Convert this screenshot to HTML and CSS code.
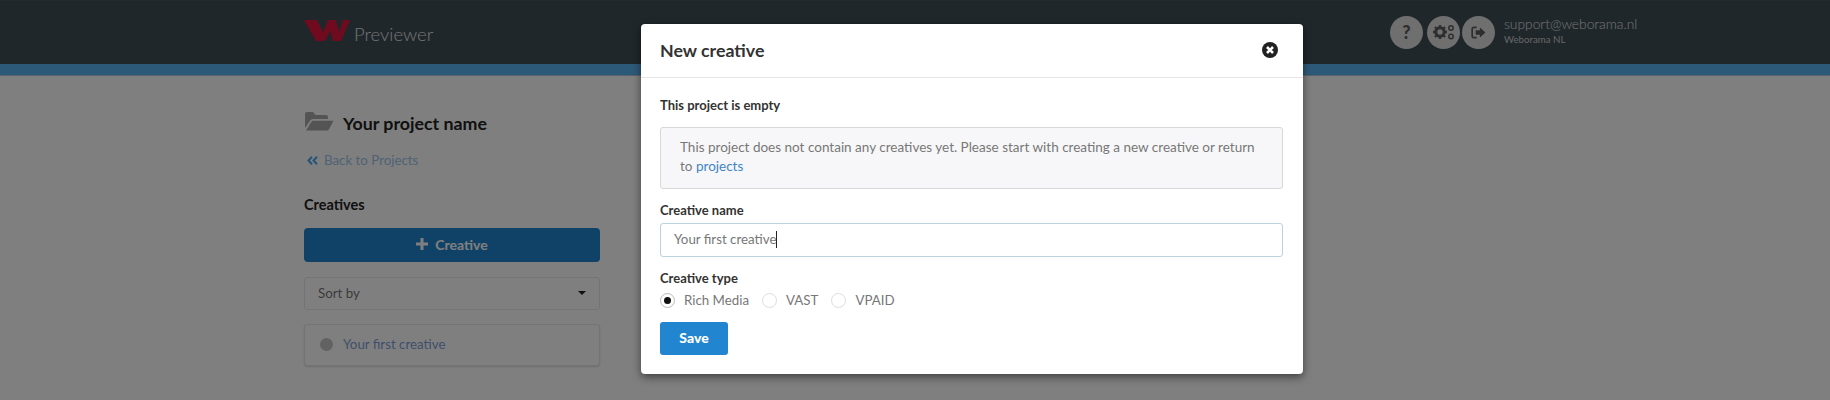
FILE: index.html
```html
<!DOCTYPE html>
<html lang="en">
<head>
<meta charset="utf-8">
<title>Previewer</title>
<link rel="stylesheet" href="styles.css">
</head>
<body>
<header class="topbar">
  <div class="brand">
    <svg class="logo" viewBox="0 0 46 22"><path d="M0 1h13l6 12 5-12h8l3 12 4-12h7l-9 21h-8l-3-10-5 10h-9z"/></svg>
    <span class="brand-name">Previewer</span>
  </div>
  <div class="account">
    <span class="round"><span class="q">?</span></span>
    <span class="round"><svg class="ic-cogs" viewBox="0 0 22 16"><circle cx="7" cy="8" r="4.2" fill="none" stroke="#5c5c5c" stroke-width="3"/><path d="M7 1v3M7 12v3M0 8h3M11 8h3M2 3l2 2M10 11l2 2M12 3l-2 2M4 11l-2 2" stroke="#5c5c5c" stroke-width="2.4"/><circle cx="18" cy="4" r="2.2" fill="none" stroke="#5c5c5c" stroke-width="1.5"/><circle cx="18" cy="12.5" r="2.2" fill="none" stroke="#5c5c5c" stroke-width="1.5"/></svg></span>
    <span class="round"><svg class="ic-out" viewBox="0 0 16 14"><path d="M6 1.5H3A1.8 1.8 0 0 0 1.2 3.300v7.400A1.800 1.800 0 0 0 3 12.500h3" fill="none" stroke="#5c5c5c" stroke-width="1.800"/><path d="M9.500 1.500 15.500 7l-6 5.500V9.300H5V4.700h4.500z" fill="#5c5c5c"/></svg></span>
    <div class="who">
      <div class="mail">support@weborama.nl</div>
      <div class="org">Weborama NL</div>
    </div>
  </div>
</header>
<div class="band"></div>
<main class="page">
  <h1 class="project"><svg class="ic-folder" viewBox="0 0 29 20"><path d="M0 17V3a2 2 0 0 1 2-2h6l2.500 3H21a2 2 0 0 1 2 2v2H8a3.500 3.500 0 0 0-3 1.700z"/><path d="M1 19.500 6.300 11A2.500 2.500 0 0 1 8.400 9.800H28.500L24 18.200a2.500 2.500 0 0 1-2.200 1.300z"/></svg>Your project name</h1>
  <a class="back"><svg class="ic-back" viewBox="0 0 11 9"><path d="M5 .8 1.500 4.500 5 8.200M10 .8 6.500 4.500 10 8.200" fill="none" stroke-width="2"/></svg>Back to Projects</a>
  <h2 class="section">Creatives</h2>
  <button class="add"><svg class="ic-plus" viewBox="0 0 12 12"><path d="M4.500 0h3v4.500H12v3H7.500V12h-3V7.500H0v-3h4.500z"/></svg>Creative</button>
  <div class="sort"><span>Sort by</span><span class="caret"></span></div>
  <div class="item"><span class="dot"></span><a>Your first creative</a></div>
</main>
<div class="overlay">
  <section class="modal">
    <div class="modal-head">
      <span class="modal-title">New creative</span>
      <svg class="ic-close" viewBox="0 0 16 16"><circle cx="8" cy="8" r="8"/><path d="M5 5l6 6M11 5l-6 6" stroke="#fff" stroke-width="2.600"/></svg>
    </div>
    <div class="modal-body">
      <div class="label first">This project is empty</div>
      <div class="notice">This project does not contain any creatives yet. Please start with creating a new creative or return to <a>projects</a></div>
      <div class="label">Creative name</div>
      <div class="field"><span class="value">Your first creative</span></div>
      <div class="label second">Creative type</div>
      <div class="radios">
        <span class="radio on"></span><span class="opt">Rich Media</span>
        <span class="radio"></span><span class="opt">VAST</span>
        <span class="radio"></span><span class="opt">VPAID</span>
      </div>
      <button class="save">Save</button>
    </div>
  </section>
</div>
</body>
</html>
```
FILE: styles.css
```css
* { box-sizing: border-box; }
html, body { margin: 0; height: 400px; overflow: hidden; }
body { background: #fff; font-family: Lato, "Open Sans", sans-serif; font-size: 13.3px; color: #333; position: relative; }
a { color: #3f86c4; }

.topbar { height: 64px; background: #3e4e56; border-top: 1px solid #465660; display: flex; padding-left: 304px; }
.brand { width: 1086px; display: flex; align-items: center; gap: 4px; }
.logo { width: 46px; height: 22px; fill: #e0143e; margin-top: -6px; }
.brand-name { font-size: 18.500px; font-weight: 300; color: #e4e4e4; margin-top: 3px; }
.account { display: flex; align-items: center; margin-top: -1px; }
.round { width: 33px; height: 33px; border-radius: 50%; background: #dedede; display: flex; align-items: center; justify-content: center; margin-right: 3px; }
.round:nth-child(2) { margin-left: 1px; margin-right: 2px; }
.q { font-size: 18px; font-weight: 900; color: #5c5c5c; }
.ic-cogs { width: 22px; height: 16px; }
.ic-out { width: 15px; height: 13px; }
.who { margin-left: 6px; color: #e4e4e4; margin-top: -3px; }
.mail { font-size: 13.800px; font-weight: 300; line-height: 18px; }
.org { font-size: 9.700px; line-height: 13px; color: #ccc; }
.band { height: 12px; background: #5ab2f0; border-bottom: 1px solid #b0c8d8; }

.page { padding-left: 304px; width: 600px; }
.project { margin: 0; padding-top: 35px; font-size: 17.800px; line-height: 24px; font-weight: 700; color: #222; display: flex; align-items: center; gap: 9px; }
.ic-folder { width: 29px; height: 20px; fill: #a8a8a8; margin-left: 1px; margin-top: -4px; }
.back { display: flex; align-items: center; gap: 6px; margin-top: 15px; line-height: 20px; color: #a0c4e8; }
.ic-back { width: 11px; height: 9px; stroke: #4aa8f0; margin-left: 3px; }
.section { margin: 25px 0 0; font-size: 14.500px; line-height: 20px; font-weight: 700; color: #222; }
.add { display: flex; align-items: center; justify-content: center; gap: 7px; width: 100%; height: 34px; margin-top: 13px; padding: 0 0 2px; border: 0; border-radius: 4px; background: #2185d0; color: #fff; font: 700 14px Lato, sans-serif; }
.ic-plus { width: 12px; height: 12px; fill: #fff; }
.sort { display: flex; align-items: center; justify-content: space-between; height: 33px; margin-top: 15px; padding: 0 13px 1px; background: #fff; border: 1px solid #e8e8e8; border-radius: 3px; color: #777; }
.caret { width: 0; height: 0; border: 4px solid transparent; border-top-color: #222; border-bottom: 0; }
.item { display: flex; align-items: center; gap: 10px; height: 42px; margin-top: 14px; padding: 0 0 3px 15px; background: #fff; border: 1px solid #e8e8e8; border-radius: 3px; box-shadow: 0 1px 2px rgba(0,0,0,.15); }
.item a { color: #7f9fd8; }
.dot { width: 13px; height: 13px; border-radius: 50%; background: #c4c4c4; margin-top: 2px; }

.overlay { position: absolute; inset: 0; background: rgba(0,0,0,.5); padding: 24px 0 0 641px; }
.modal { width: 662px; height: 350px; background: #fff; border-radius: 4px; box-shadow: 0 3px 9px rgba(0,0,0,.5); }
.modal-head { height: 54px; border-bottom: 1px solid #e5e5e5; display: flex; align-items: center; justify-content: space-between; padding: 0 25px 2px 19px; }
.modal-title { font-size: 17.800px; font-weight: 700; color: #333; }
.ic-close { width: 16px; height: 16px; fill: #222; }
.modal-body { padding: 0 20px 0 19px; }
.label { font-size: 13px; line-height: 16px; font-weight: 700; color: #333; margin-top: 13px; }
.label.first { margin-top: 19px; }
.notice { margin-top: 14px; height: 62px; padding: 10px 22px 10px 19px; background: #f7f7f9; border: 1px solid #d8d8d8; border-radius: 3px; font-size: 13.500px; line-height: 19px; color: #777; }
.field { height: 34px; margin-top: 5px; padding: 0 13px 2px; display: flex; align-items: center; border: 1px solid #bcd3de; border-radius: 3px; color: #777; }
.value { border-right: 1px solid #222; line-height: 17px; }
.radios { display: flex; align-items: center; margin-top: 4px; height: 20px; color: #777; }
.radio { width: 15px; height: 15px; border-radius: 50%; border: 1px solid #ddd; background: #fff; display: flex; align-items: center; justify-content: center; }
.radio.on { border-color: #bbb; }
.radio.on::after { content: ""; width: 7px; height: 7px; border-radius: 50%; background: #111; }
.opt { margin: 0 13px 0 9px; }
.save { display: block; width: 68px; height: 33px; margin-top: 12px; padding: 0 0 2px; border: 0; border-radius: 3px; background: #2185d0; color: #fff; font: 900 14px Lato, sans-serif; }
```
